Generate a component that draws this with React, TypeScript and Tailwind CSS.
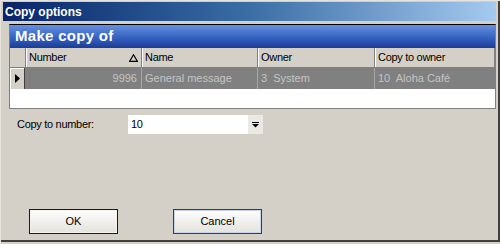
const font = { fontFamily: '"Liberation Sans", Arial, sans-serif' }

function HeaderCell({ label, sort, className }: { label: string; sort?: boolean; className: string }) {
  return (
    <div className={`flex h-full items-center border-l border-[#808080] pl-[3px] pr-[2px] shadow-[inset_1px_0_0_#ffffff] ${className}`}>
      <span className="flex-1">{label}</span>
      {sort && (
        <svg width="9" height="8" viewBox="0 0 9 8" className="mr-[1px]">
          <path d="M4.5 0.8 L8.3 7.3 L0.7 7.3 Z" fill="none" stroke="#000" strokeWidth="1.2" />
        </svg>
      )}
    </div>
  )
}

function DataCell({ text, right, className }: { text: string; right?: boolean; className: string }) {
  return (
    <div className={`flex h-full items-center border-l border-[#a8a8a8] px-[3px] ${right ? "justify-end" : ""} ${className}`}>
      {text}
    </div>
  )
}

export default function App() {
  return (
    <div
      className="flex h-[244px] w-[500px] flex-col overflow-hidden border-l border-t border-[#e6e3dc] bg-[#d4d0c8] text-[11px] tracking-[-0.3px] text-black"
      style={font}
    >
      <div className="flex h-[241px] flex-col border-b-2 border-r-2 border-[#404040]">
        {/* Title bar */}
        <div className="mx-[2px] mt-[1px] flex h-[19px] items-center bg-gradient-to-r from-[#0a246a] via-[#3a6ea5] to-[#a6caf0] pl-[2px] text-[12px] font-bold tracking-normal text-white">
          Copy options
        </div>

        {/* Make copy of panel */}
        <div className="ml-[8px] mt-[3px] flex h-[85px] w-[487px] flex-col border border-[#808080] border-t-black bg-white">
          <div className="flex h-[23px] items-center bg-gradient-to-b from-[#6690e0] via-[#3a66c4] to-[#1a3c98] pl-[5px] text-[15px] font-bold tracking-[0.3px] text-white">
            Make copy of
          </div>
          <div className="flex h-[20px] items-center border-b border-[#808080] bg-[#d4d0c8]">
            <div className="h-full w-[15px]" />
            <HeaderCell label="Number" sort className="w-[116px]" />
            <HeaderCell label="Name" className="w-[116px]" />
            <HeaderCell label="Owner" className="w-[117px]" />
            <HeaderCell label="Copy to owner" className="flex-1 border-r" />
          </div>
          <div className="flex h-[21px] items-center bg-[#808080] tracking-normal text-[#c4c4c4]">
            <div className="flex h-full w-[15px] items-center justify-center border-r border-[#404040] bg-[#d4d0c8] shadow-[inset_1px_1px_0_#ffffff]">
              <svg width="5" height="9" viewBox="0 0 5 9">
                <path d="M0 0 L5 4.5 L0 9 Z" fill="#000" />
              </svg>
            </div>
            <DataCell text="9996" right className="w-[116px] border-l-0 pr-[4px]" />
            <DataCell text="General message" className="w-[116px]" />
            <DataCell text="3  System" className="w-[117px] whitespace-pre" />
            <DataCell text="10  Aloha Café" className="flex-1 whitespace-pre" />
          </div>
          <div className="flex-1 bg-white" />
        </div>

        {/* Copy to number */}
        <div className="mt-[6px] flex h-[19px] items-center">
          <div className="w-[127px] pl-[16px]">Copy to number:</div>
          <div className="flex h-full w-[120px] items-center bg-white pl-[3px]">10</div>
          <div className="flex h-full w-[15px] items-center justify-center bg-[#ebe9e4]">
            <svg width="7" height="6" viewBox="0 0 7 6">
              <rect x="0" y="0" width="7" height="1" fill="#000" />
              <path d="M0 2 L7 2 L3.5 5.5 Z" fill="#000" />
            </svg>
          </div>
        </div>

        {/* Buttons */}
        <div className="mt-auto mb-[6px] flex gap-[55px] pl-[28px] tracking-normal">
          <button className="flex h-[25px] w-[89px] items-center justify-center border border-[#1a1a1a] bg-gradient-to-b from-[#fefefe] to-[#e4e2dc] shadow-[inset_0_0_0_1px_#f4f3ef]">
            OK
          </button>
          <button className="flex h-[25px] w-[89px] items-center justify-center border border-[#223d80] bg-gradient-to-b from-[#fefefe] to-[#e4e2dc] shadow-[inset_0_0_0_1px_#c6d4ec]">
            Cancel
          </button>
        </div>
      </div>
    </div>
  )
}
